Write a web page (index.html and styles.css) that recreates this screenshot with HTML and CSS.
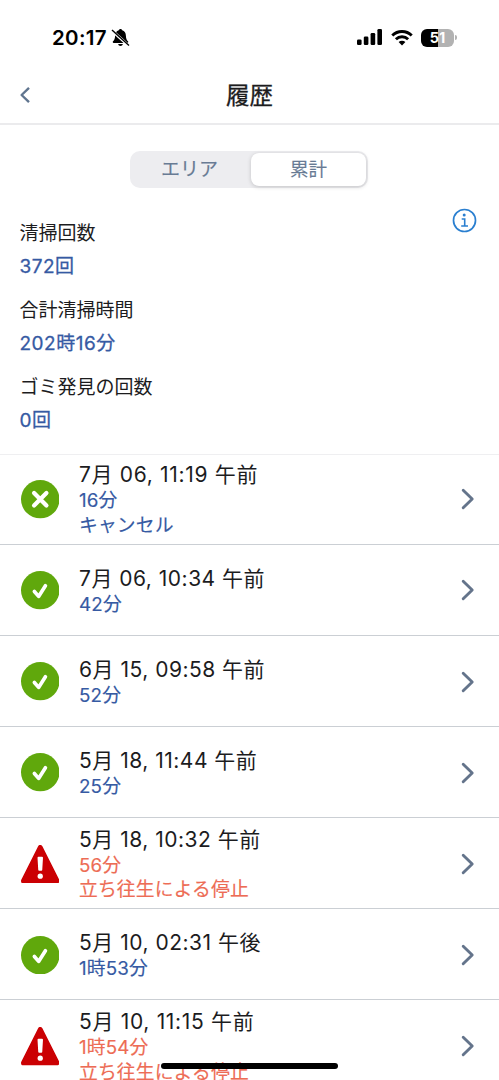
FILE: index.html
```html
<!DOCTYPE html>
<html lang="ja">
<head>
<meta charset="utf-8">
<title>履歴</title>
<link rel="stylesheet" href="styles.css">
</head>
<body>
<svg class="defs" width="0" height="0">
  <symbol id="ok" viewBox="0 0 38 38"><circle cx="19" cy="19" r="19" fill="#60a80c"/><path d="M13.200 20.200l4.200 4.900 6.700-10.600" fill="none" stroke="#fff" stroke-width="3.600" stroke-linecap="round" stroke-linejoin="round"/></symbol>
  <symbol id="cancel" viewBox="0 0 38 38"><circle cx="19" cy="19" r="19" fill="#60a80c"/><path d="M12.900 12.900l12.200 12.200M25.100 12.900L12.900 25.100" fill="none" stroke="#fff" stroke-width="4.200" stroke-linecap="round"/></symbol>
  <symbol id="alert" viewBox="0 0 38 38"><path d="M19 2.500L35.500 35.500H2.500z" fill="#cb0003" stroke="#cb0003" stroke-width="5" stroke-linejoin="round"/><path d="M16.300 12.500q0-1 1-1h3.400q1 0 1 1l-.7 12q0 1-1 1h-2q-1 0-1-1z" fill="#fff"/><circle cx="19" cy="30.800" r="2.600" fill="#fff"/></symbol>
  <symbol id="next" viewBox="0 0 14 22"><path d="M2.200 2.200L11.200 11l-9 8.800" fill="none" stroke="#64748b" stroke-width="2.900" stroke-linecap="round" stroke-linejoin="round"/></symbol>
</svg>
<div class="screen">
  <div class="status">
    <span class="time">20:17</span>
    <svg class="bell" viewBox="0 0 18 20"><path d="M9 1c.9 0 1.500.6 1.700 1.300 2.500.8 3.600 2.900 3.700 5.400.1 3 .9 4.400 2.100 5.600.5.600.3 1.700-.7 1.700H2.200c-1 0-1.200-1.100-.7-1.700C2.700 12.100 3.500 10.700 3.600 7.700c.1-2.500 1.200-4.600 3.700-5.400C7.500 1.600 8.100 1 9 1zM6.600 16h4.800c-.3 1.300-1.200 2-2.400 2s-2.100-.7-2.400-2z"/><path d="M0 2.200L17.500 18" stroke="#fff" stroke-width="3"/><path d="M.5 2L17.500 17.500" stroke="#000" stroke-width="1.400"/></svg>
    <span class="fill"></span>
    <svg class="signal" viewBox="0 0 26 17"><rect x="0" y="10.500" width="4.600" height="5.500" rx="1.300"/><rect x="6.800" y="7.500" width="4.600" height="8.500" rx="1.300"/><rect x="13.600" y="4" width="4.600" height="12" rx="1.300"/><rect x="20.400" y="0" width="4.600" height="16" rx="1.300"/></svg>
    <svg class="wifi" viewBox="0 0 22 16"><g fill="none" stroke="#000" stroke-width="2.900"><path d="M1.300 5.600a13.700 13.700 0 0 1 19.400 0"/><path d="M4.900 9.300a8.700 8.700 0 0 1 12.200 0"/></g><path d="M7.600 12a4.900 4.900 0 0 1 6.800 0L11 15.500z"/></svg>
    <div class="battery"><span>51</span></div><i class="nub"></i>
  </div>
  <header class="nav">
    <svg class="back" viewBox="0 0 12 18"><path d="M10 1.800L2.600 9l7.400 7.200" fill="none" stroke="#60758f" stroke-width="2.400" stroke-linejoin="round"/></svg>
    <h1>履歴</h1>
  </header>
  <div class="tabs"><span class="tab">エリア</span><span class="tab on">累計</span></div>
  <section class="totals">
    <dl>
      <dt>清掃回数</dt><dd>372回</dd>
      <dt>合計清掃時間</dt><dd>202時16分</dd>
      <dt>ゴミ発見の回数</dt><dd>0回</dd>
    </dl>
    <svg class="info" viewBox="0 0 25 25"><circle cx="12.500" cy="12.500" r="11" fill="none" stroke="#2a7fd0" stroke-width="1.700"/><circle cx="12.200" cy="7" r="1.500" fill="#2a7fd0"/><path d="M9.700 11h3v7M9.200 18h6.800" fill="none" stroke="#2a7fd0" stroke-width="1.600"/></svg>
  </section>
  <ul class="list">
    <li class="row first"><svg class="mark"><use href="#cancel"/></svg><div class="text"><p class="date wide">7月 06, 11:19 午前</p><p>16分</p><p>キャンセル</p></div><svg class="next"><use href="#next"/></svg></li>
    <li class="row"><svg class="mark"><use href="#ok"/></svg><div class="text"><p class="date">7月 06, 10:34 午前</p><p>42分</p></div><svg class="next"><use href="#next"/></svg></li>
    <li class="row"><svg class="mark"><use href="#ok"/></svg><div class="text"><p class="date">6月 15, 09:58 午前</p><p>52分</p></div><svg class="next"><use href="#next"/></svg></li>
    <li class="row"><svg class="mark"><use href="#ok"/></svg><div class="text"><p class="date">5月 18, 11:44 午前</p><p>25分</p></div><svg class="next"><use href="#next"/></svg></li>
    <li class="row error"><svg class="mark"><use href="#alert"/></svg><div class="text"><p class="date">5月 18, 10:32 午前</p><p>56分</p><p>立ち往生による停止</p></div><svg class="next"><use href="#next"/></svg></li>
    <li class="row"><svg class="mark"><use href="#ok"/></svg><div class="text"><p class="date">5月 10, 02:31 午後</p><p>1時53分</p></div><svg class="next"><use href="#next"/></svg></li>
    <li class="row error"><svg class="mark"><use href="#alert"/></svg><div class="text"><p class="date wide">5月 10, 11:15 午前</p><p>1時54分</p><p>立ち往生による停止</p></div><svg class="next"><use href="#next"/></svg></li>
  </ul>
  <div class="home"></div>
</div>
</body>
</html>
```
FILE: styles.css
```css
* { box-sizing: border-box; margin: 0; padding: 0; }
body { background: #fff; font-family: Inter, "Noto Sans CJK JP", sans-serif; color: #1c1c1e; }
.defs { position: absolute; }
.screen { position: relative; width: 499px; height: 1080px; overflow: hidden; display: flex; flex-direction: column; }
.status { height: 65px; flex: none; display: flex; align-items: center; padding: 10px 42px 0 52px; color: #000; }
.time { font-size: 20.500px; font-weight: 600; letter-spacing: .3px; }
.bell { width: 19px; height: 20px; margin-left: 4px; }
.fill { flex: 1; }
.signal { width: 26px; height: 17px; margin-right: 8px; }
.wifi { width: 22px; height: 16px; margin-right: 8px; }
.battery { width: 33px; height: 18px; border-radius: 6px; background: linear-gradient(90deg, #000 52%, #b2b2b2 52%); color: #fff; font-size: 14.500px; font-weight: 700; line-height: 18px; text-align: center; }
.nub { width: 2px; height: 5px; margin-left: 1px; border-radius: 0 2px 2px 0; background: #b2b2b2; }
.nav { height: 60px; flex: none; display: grid; grid-template-columns: 40px 1fr 40px; align-items: center; border-bottom: 2px solid #ebebed; }
.back { width: 12px; height: 18px; margin: 1px 0 0 19px; }
.nav h1 { font-size: 23.500px; font-weight: 400; line-height: 34px; padding-top: 3px; text-align: center; -webkit-text-stroke: .3px #1c1c1e; }
.tabs { width: 238px; height: 37px; flex: none; margin: 26px 0 0 130px; padding: 2px; display: flex; border-radius: 10px; background: #ededf0; }
.tab { flex: 1; height: 33px; line-height: 33px; padding-right: 4px; text-align: center; font-size: 19px; font-weight: 400; color: #687b94; -webkit-text-stroke: .15px #687b94; }
.tab.on { flex: none; width: 115px; padding: 0; line-height: 32px; font-size: 18.500px; background: #fff; border-radius: 8px; box-shadow: 0 1px 4px rgba(0,0,0,.18); }
.totals { height: 266px; flex: none; display: flex; justify-content: space-between; padding: 20px 22px 0 19.500px; }
.totals dt { font-size: 19px; line-height: 36px; height: 36px; margin-top: 9px; }
.totals dt:first-child { margin-top: 8px; }
.totals dd { font-size: 19px; line-height: 30px; height: 32px; letter-spacing: .5px; color: #365aa3; -webkit-text-stroke: .3px #365aa3; }
.info { width: 25px; height: 25px; }
.list { list-style: none; border-top: 1px solid #efeff1; }
.row { height: 91.200px; padding: 1.500px 24px 0 20.500px; display: flex; align-items: center; border-bottom: 1px solid #cbcfd4; color: #365aa3; }
.row.first { height: 89.500px; padding-top: 0; }
.row.error { color: #ed6c55; }
.mark { width: 38.500px; height: 38.500px; }
.text { flex: 1; margin-left: 20px; padding-top: 1px; }
.text p { font-size: 18.800px; line-height: 24.500px; letter-spacing: .15px; -webkit-text-stroke: .15px currentColor; }
.text .date { font-size: 21px; line-height: 28px; letter-spacing: .5px; color: #1c1c1e; -webkit-text-stroke: 0; }
.text .date.wide { letter-spacing: .68px; }
.next { width: 14px; height: 22px; }
.home { position: absolute; left: 161px; top: 1063px; width: 177px; height: 6px; border-radius: 3px; background: #000; }
```
